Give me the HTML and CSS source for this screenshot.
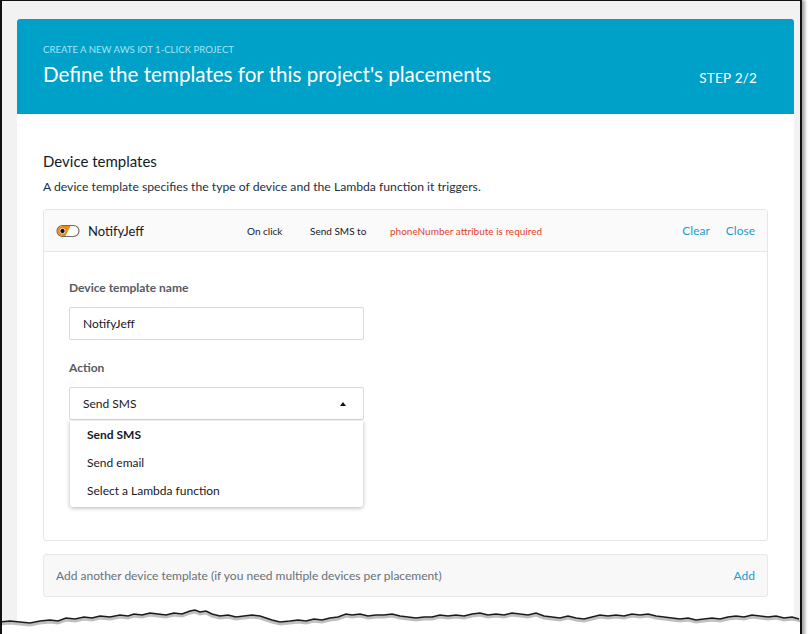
FILE: index.html
```html
<!DOCTYPE html>
<html lang="en">
<head>
    <meta charset="UTF-8">
    <meta name="viewport" content="width=device-width, initial-scale=1.0">
    <title>Define the templates for this project's placements</title>
    <link rel="stylesheet" href="styles.css">
</head>
<body>
    <div class="frame">
        <div class="card">
            <header class="hero">
                <p class="kicker">CREATE A NEW AWS IOT 1-CLICK PROJECT</p>
                <div class="hero-row">
                    <h1>Define the templates for this project's placements</h1>
                    <span class="step">STEP 2/2</span>
                </div>
            </header>

            <section class="content">
                <h2>Device templates</h2>
                <p class="desc">A device template specifies the type of device and the Lambda function it triggers.</p>

                <div class="template">
                    <div class="template-head">
                        <svg class="toggle" width="24" height="14" viewBox="0 0 24 14">
                            <rect x="1" y="1.5" width="22" height="11" rx="5.5" fill="#fff" stroke="#6b6b6b" stroke-width="1.2"/>
                            <path d="M6.5 2.1 H14.5 L9.5 11.9 H6.5 A4.9 4.9 0 0 1 6.5 2.1 Z" fill="#ec8a12"/>
                            <circle cx="6.5" cy="7" r="2.6" fill="#111" stroke="#fff" stroke-width="0.8"/>
                        </svg>
                        <span class="name">NotifyJeff</span>
                        <span class="meta on-click">On click</span>
                        <span class="meta send-to">Send SMS to</span>
                        <span class="error">phoneNumber attribute is required</span>
                        <span class="links">
                            <a href="#">Clear</a>
                            <a href="#">Close</a>
                        </span>
                    </div>
                    <div class="template-body">
                        <label class="field-label">Device template name</label>
                        <div class="input">NotifyJeff</div>

                        <label class="field-label action-label">Action</label>
                        <div class="select-wrap">
                            <div class="select">
                                <span>Send SMS</span>
                                <span class="caret"></span>
                            </div>
                            <ul class="menu">
                                <li class="selected">Send SMS</li>
                                <li>Send email</li>
                                <li>Select a Lambda function</li>
                            </ul>
                        </div>
                    </div>
                </div>

                <div class="add-row">
                    <span>Add another device template (if you need multiple devices per placement)</span>
                    <a href="#">Add</a>
                </div>
            </section>
        </div>

        <svg class="torn" width="810" height="40" viewBox="0 0 810 40">
            <path d="M0 19 L10 18 L20 19 L30 20 L40 18 L50 17 L58 18 L66 15 L75 16 L84 14 L92 15 L100 13 L110 14 L120 12 L128 13 L134 11 L142 12 L150 10 L158 11 L166 12 L174 10 L182 11 L190 8 L195 7 L200 9 L206 8 L212 11 L220 13 L228 12 L236 14 L244 13 L252 12 L260 13 L266 15 L272 17 L280 19 L290 18 L298 17 L306 18 L314 16 L322 17 L330 15 L338 14 L346 11 L352 12 L360 11 L368 13 L376 12 L384 12 L392 11 L400 13 L408 14 L416 15 L424 14 L432 14 L440 12 L448 13 L456 12 L464 13 L472 11 L480 10 L488 12 L496 11 L504 12 L512 10 L520 11 L528 12 L536 10 L544 13 L552 14 L560 15 L568 13 L576 15 L584 16 L592 14 L600 12 L608 13 L616 12 L624 13 L632 11 L640 12 L648 11 L656 13 L664 14 L672 15 L680 16 L688 15 L696 17 L704 16 L712 15 L720 16 L728 14 L736 13 L744 14 L752 12 L760 13 L768 14 L776 13 L784 15 L792 14 L799 16 L810 16 L810 40 L0 40 Z" fill="#fff"/>
            <polyline class="torn-shadow" points="0,21 10,20 20,21 30,22 40,20 50,19 58,20 66,17 75,18 84,16 92,17 100,15 110,16 120,14 128,15 134,13 142,14 150,12 158,13 166,14 174,12 182,13 190,10 195,9 200,11 206,10 212,13 220,15 228,14 236,16 244,15 252,14 260,15 266,17 272,19 280,21 290,20 298,19 306,20 314,18 322,19 330,17 338,16 346,13 352,14 360,13 368,15 376,14 384,14 392,13 400,15 408,16 416,17 424,16 432,16 440,14 448,15 456,14 464,15 472,13 480,12 488,14 496,13 504,14 512,12 520,13 528,14 536,12 544,15 552,16 560,17 568,15 576,17 584,18 592,16 600,14 608,15 616,14 624,15 632,13 640,14 648,13 656,15 664,16 672,17 680,18 688,17 696,19 704,18 712,17 720,18 728,16 736,15 744,16 752,14 760,15 768,16 776,15 784,17 792,16 801,18"/>
            <polyline class="torn-line" points="0,19 10,18 20,19 30,20 40,18 50,17 58,18 66,15 75,16 84,14 92,15 100,13 110,14 120,12 128,13 134,11 142,12 150,10 158,11 166,12 174,10 182,11 190,8 195,7 200,9 206,8 212,11 220,13 228,12 236,14 244,13 252,12 260,13 266,15 272,17 280,19 290,18 298,17 306,18 314,16 322,17 330,15 338,14 346,11 352,12 360,11 368,13 376,12 384,12 392,11 400,13 408,14 416,15 424,14 432,14 440,12 448,13 456,12 464,13 472,11 480,10 488,12 496,11 504,12 512,10 520,11 528,12 536,10 544,13 552,14 560,15 568,13 576,15 584,16 592,14 600,12 608,13 616,12 624,13 632,11 640,12 648,11 656,13 664,14 672,15 680,16 688,15 696,17 704,16 712,15 720,16 728,14 736,13 744,14 752,12 760,13 768,14 776,13 784,15 792,14 799,16"/>
        </svg>
    </div>
</body>
</html>
```

FILE: styles.css
```css
body {
    margin: 0;
    background: #fff;
    font-family: 'Lato', 'Open Sans', sans-serif;
    color: #16191f;
}

.frame {
    position: relative;
    width: 780px;
    height: 634px;
    overflow: hidden;
    background: #f2f2f2;
    border-left: 2px solid #111;
    border-top: 1px solid #111;
    border-right: 2px solid #111;
    padding: 18px 3px 0 15px;
    box-shadow: 3px 0 3px rgba(0, 0, 0, 0.35);
}

.card {
    width: 777px;
    height: 616px;
    background: #fff;
}

/* blue banner */
.hero {
    height: 95px;
    box-sizing: border-box;
    background: #00a1c9;
    border-radius: 3px 3px 0 0;
    padding: 25px 37px 0 26px;
    color: #fff;
}

.kicker {
    margin: 0;
    font-size: 9.6px;
    line-height: 12px;
    color: #a3e4f5;
}

.hero-row {
    display: flex;
    align-items: baseline;
    justify-content: space-between;
    margin-top: 4px;
}

h1 {
    margin: 0;
    font-size: 20.6px;
    font-weight: 400;
    line-height: 28px;
}

.step {
    font-size: 13.5px;
    font-weight: 400;
    letter-spacing: 0.2px;
    position: relative;
    top: 1px;
}

/* main content */
.content {
    padding: 37px 26px 0 26px;
}

h2 {
    margin: 0;
    font-size: 15px;
    line-height: 20px;
    font-weight: 400;
}

.desc {
    margin: 8px 0 14px 0;
    font-size: 12.2px;
    line-height: 16px;
    color: #232f3e;
}

.template {
    border: 1px solid #e4e6e8;
    border-radius: 3px;
}

.template-head {
    display: flex;
    align-items: center;
    height: 42px;
    box-sizing: border-box;
    padding: 0 12px 0 12px;
    background: #fafafa;
    border-bottom: 1px solid #e4e6e8;
    font-size: 10px;
}

.toggle {
    margin-right: 8px;
}

.name {
    font-size: 13px;
    font-weight: 400;
    width: 159px;
}

.on-click {
    width: 63px;
}

.send-to {
    width: 80px;
}

.error {
    color: #e3452f;
}

.links {
    margin-left: auto;
    display: flex;
    gap: 16px;
}

a {
    color: #1a9cd0;
    text-decoration: none;
    font-size: 12px;
}

.template-body {
    padding: 28px 25px 120px 25px;
}

.field-label {
    display: block;
    font-size: 12px;
    line-height: 16px;
    font-weight: 700;
    color: #545b64;
    margin-bottom: 11px;
}

.action-label {
    margin-top: 20px;
}

.input,
.select {
    width: 295px;
    height: 33px;
    box-sizing: border-box;
    border: 1px solid #d5dbdb;
    border-radius: 2px;
    padding: 0 13px;
    display: flex;
    align-items: center;
    font-size: 12px;
    color: #16191f;
}

.select-wrap {
    position: relative;
}

.select {
    justify-content: space-between;
}

.caret {
    width: 0;
    height: 0;
    border-left: 3.5px solid transparent;
    border-right: 3.5px solid transparent;
    border-bottom: 4px solid #111;
    margin-right: 4px;
}

.menu {
    position: absolute;
    top: 34px;
    left: 1px;
    width: 293px;
    margin: 0;
    padding: 0 0 2px 0;
    list-style: none;
    background: #fff;
    border-radius: 0 0 3px 3px;
    box-shadow: 0 1px 4px rgba(0, 0, 0, 0.3);
}

.menu li {
    height: 28px;
    line-height: 28px;
    padding: 0 17px;
    font-size: 12px;
    color: #16191f;
}

.menu li.selected {
    font-weight: 700;
}

.add-row {
    margin-top: 13px;
    height: 43px;
    box-sizing: border-box;
    display: flex;
    align-items: center;
    justify-content: space-between;
    padding: 0 12px;
    background: #f8f8f8;
    border: 1px solid #e8e8e8;
    border-radius: 3px;
    font-size: 12px;
    color: #687078;
}

/* torn paper edge over the bottom of the screenshot */
.torn {
    position: absolute;
    left: -2px;
    top: 602px;
}

.torn-shadow {
    fill: none;
    stroke: rgba(0, 0, 0, 0.25);
    stroke-width: 3;
}

.torn-line {
    fill: none;
    stroke: #1a1a1a;
    stroke-width: 1.4;
}
```
